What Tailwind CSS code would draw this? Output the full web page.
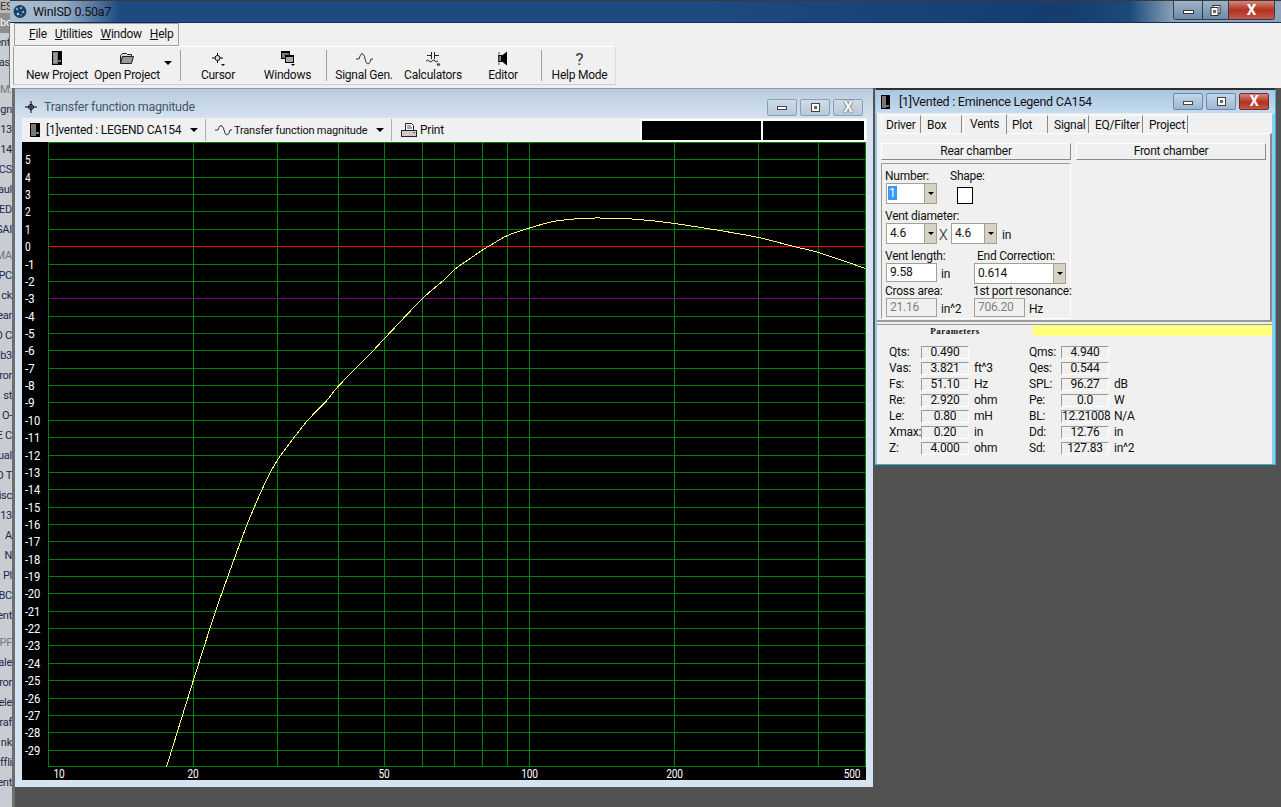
<!DOCTYPE html>
<html lang="en">
<head>
  <meta charset="UTF-8">
  <title>WinISD 0.50a7</title>
  <script src="https://cdn.jsdelivr.net/npm/@tailwindcss/browser@4"></script>
</head>
<body class="relative w-[1281px] h-[807px] overflow-hidden bg-[#525252] font-['Roboto',sans-serif] text-[12px] tracking-[-0.25px] leading-[13px] text-[#111]">

  <!-- Desktop behind the app, only a sliver shows on the left -->
  <div class="absolute left-0 top-0 w-[12px] h-[807px] overflow-hidden bg-[#c9ccd3] text-[11px] leading-[20px] text-[#1c2a4a]">
    <div class="h-[13px] leading-[13px] bg-[#b9b9b9] text-right pr-[2px] text-[#333]">ES</div>
    <div class="h-[20px] bg-[#8d8d8d] text-right pr-[2px] text-white">bo</div>
    <div class="flex flex-col items-end whitespace-nowrap">
      <div class="pr-[2px]">ent</div><div class="pr-[2px]">ras</div>
      <div class="mt-[7px] text-[#777]">M.</div>
      <div>gn</div><div>13</div><div>14</div><div>CS</div><div>aul</div><div>ED</div><div>SAI</div>
      <div class="mt-[6px] text-[#777]">MA</div>
      <div>TPC</div><div>ck</div><div>ear</div><div>O C</div><div>ob3</div><div>ror</div><div>st</div><div>O-</div><div>E C</div>
      <div>ual</div><div>D T</div><div>isc</div><div>13</div><div>A</div><div>N</div><div>Pl</div><div>BC</div><div>ent</div>
      <div class="mt-[7px] text-[#777]">PF</div>
      <div>ale</div><div>ror</div><div>ele</div><div>raf</div><div>nk</div><div>ffli</div><div>ent</div>
    </div>
  </div>
  <div class="absolute left-[9px] top-[23px] w-px h-[65px] bg-[#777]"></div>
  <div class="absolute left-[12px] top-[88px] w-[3px] h-[719px] bg-[#6e6e6e]"></div>

  <!-- Main window chrome -->
  <div class="absolute left-[10px] top-0 w-[1271px] h-[88px] flex flex-col bg-[#f0f0f0]">
    <header class="relative h-[23px] shrink-0 flex items-center pl-[3px] gap-[6px] border-t border-b border-t-[#3a3a3a] border-b-[#12305a] bg-[linear-gradient(90deg,#a9bdd2_0px,#9db3cb_50px,#1d4a80_110px,#1d4a80_700px,#163c70_1060px,#1c4a7c_1120px,#8fa4ba_1165px,#8fa4ba_1271px)]">
      <svg width="14" height="15" viewBox="0 0 14 15"><circle cx="7" cy="7.5" r="6.5" fill="#1f3f66"/><circle cx="4" cy="5" r="1.2" fill="#6fb0e0"/><circle cx="8" cy="4" r="1" fill="#a9d4f0"/><circle cx="10" cy="8" r="1.2" fill="#6fb0e0"/><circle cx="5" cy="10" r="1.2" fill="#a9d4f0"/><circle cx="8" cy="11" r="0.8" fill="#6fb0e0"/></svg>
      <span class="text-[12.5px] text-[#111]">WinISD 0.50a7</span>
      <div class="absolute right-[6px] top-0 flex h-[19px] w-[102px] rounded-b-[3px] border border-t-0 border-[#2a3f55] overflow-hidden">
        <div class="w-[29px] flex items-center justify-center bg-[linear-gradient(#9fb4c9,#6f89a5)] border-r border-[#2a3f55]"><span class="block w-[11px] h-[4px] mt-[3px] bg-white border border-[#333]"></span></div>
        <div class="w-[26px] flex items-center justify-center bg-[linear-gradient(#9fb4c9,#6f89a5)] border-r border-[#2a3f55]"><svg width="11" height="11" viewBox="0 0 11 11"><rect x="3" y="0.5" width="7" height="8" fill="#fff" stroke="#333"/><rect x="1" y="2.5" width="7" height="8" fill="#fff" stroke="#333"/><rect x="3" y="5" width="3" height="3" fill="#667"/></svg></div>
        <div class="flex-1 flex items-center justify-center bg-[linear-gradient(#d8867a,#b2321f_50%,#c4574a)] text-white text-[15px] font-bold leading-none">X</div>
      </div>
    </header>

    <nav class="h-[23px] w-[165px] ml-[4px] flex items-center gap-[8px] pl-[14px] border border-[#a0a0a0]">
      <span><u>F</u>ile</span><span><u>U</u>tilities</span><span><u>W</u>indow</span><span><u>H</u>elp</span>
    </nav>

    <div class="h-[39px] w-[603px] ml-[3px] flex items-stretch border-t border-l border-white border-l-[#a0a0a0] border-b border-b-[#cfcfcf] border-r border-r-[#dcdcdc] text-center">
      <div class="w-[10px] shrink-0"></div>
      <button class="w-[66px] shrink-0 flex flex-col items-center pt-[4px] whitespace-nowrap">
        <svg class="h-[15px]" width="12" height="15" viewBox="0 0 12 15"><rect x="1.5" y="0.5" width="9" height="13" fill="#777" stroke="#000"/><rect x="7" y="1" width="3" height="8" fill="#000"/><rect x="7" y="11" width="3" height="2" fill="#000"/><path d="M2 3h4M3 5h3M2 7h4M3 9h3M2 11h4" stroke="#bbb"/></svg>
        <span class="mt-[3px]">New Project</span>
      </button>
      <button class="w-[74px] shrink-0 flex flex-col items-center pt-[4px] whitespace-nowrap">
        <svg class="h-[15px]" width="16" height="15" viewBox="0 0 16 15"><path d="M1.5 4.5l2-2h4l1 1h4v2h-9l-2 7z" fill="#ddd" stroke="#222"/><path d="M3.5 5.5h11l-2 7h-11z" fill="#999" stroke="#222"/></svg>
        <span class="mt-[3px]">Open Project</span>
      </button>
      <div class="w-[16px] shrink-0 flex items-center pb-[5px]"><span class="block border-x-[4px] border-t-[4px] border-x-transparent border-t-black"></span></div>
      <div class="w-px shrink-0 my-[3px] bg-[#a0a0a0]"></div>

      <button class="w-[74px] shrink-0 flex flex-col items-center pt-[4px]">
        <svg class="h-[15px]" width="16" height="15" viewBox="0 0 16 15"><path d="M7.5 2v10M2 7h11" stroke="#000"/><circle cx="7.5" cy="7" r="2.5" fill="#ddd" stroke="#000"/><path d="M11 13h4l-2 2z" fill="#000"/></svg>
        <span class="mt-[3px]">Cursor</span>
      </button>
      <button class="w-[65px] shrink-0 flex flex-col items-center pt-[4px]">
        <svg class="h-[15px]" width="16" height="15" viewBox="0 0 16 15"><rect x="1.5" y="0.5" width="8" height="7" fill="#777" stroke="#000"/><rect x="5.5" y="4.5" width="8" height="7" fill="#aaa" stroke="#000"/><path d="M1 1.5h9M5 5.5h9" stroke="#000"/><path d="M11 13h4l-2 2z" fill="#000"/></svg>
        <span class="mt-[3px]">Windows</span>
      </button>
      <div class="w-[6px] shrink-0"></div>
      <div class="w-px shrink-0 my-[3px] bg-[#a0a0a0]"></div>

      <button class="w-[74px] shrink-0 flex flex-col items-center pt-[4px] whitespace-nowrap">
        <svg class="h-[15px]" width="17" height="15" viewBox="0 0 17 15"><path d="M0 8h3q2-7 4-5t2 5q1 5 3 5t3-5h2" fill="none" stroke="#333"/></svg>
        <span class="mt-[3px]">Signal Gen.</span>
      </button>
      <button class="w-[64px] shrink-0 flex flex-col items-center pt-[4px]">
        <svg class="h-[15px]" width="16" height="15" viewBox="0 0 16 15"><path d="M2 4.5h4M10 4.5h4M6.5 1v7M9.5 1v7M1 10q2-2 3 0t3 0 3 0 3 0M12 13h3l-1.5 2z" fill="none" stroke="#222"/></svg>
        <span class="mt-[3px]">Calculators</span>
      </button>
      <button class="w-[76px] shrink-0 flex flex-col items-center pt-[4px]">
        <svg class="h-[15px]" width="12" height="15" viewBox="0 0 12 15"><rect x="1.5" y="4.5" width="3" height="6" fill="#888" stroke="#000"/><path d="M5 4.5l5-4v14l-5-4z" fill="#000"/><path d="M2 1v13" stroke="#555"/></svg>
        <span class="mt-[3px]">Editor</span>
      </button>
      <div class="w-px shrink-0 my-[3px] bg-[#a0a0a0]"></div>

      <button class="w-[75px] shrink-0 flex flex-col items-center pt-[4px] whitespace-nowrap">
        <span class="h-[17px] text-[17px] leading-[17px] text-[#333]">?</span>
        <span class="mt-[1px]">Help Mode</span>
      </button>
    </div>
  </div>

  <!-- Chart window -->
  <section class="absolute left-[15px] top-[88px] w-[858px] h-[699px] flex flex-col px-[7px] bg-[#d6e4f2] border-t border-t-[#8b9aa9]">
    <div class="absolute inset-x-0 top-0 h-[30px] bg-[linear-gradient(#b9cbdc,#d5e3f0)]"></div>
    <div class="relative h-[29px] shrink-0 flex items-center pt-[6px] pl-[2px] gap-[6px]">
      <svg width="14" height="14" viewBox="0 0 14 14"><path d="M7 1v12M1 7h12" stroke="#000"/><circle cx="7" cy="7" r="2.5" fill="none" stroke="#000"/></svg>
      <span class="text-[12.5px] text-[#46566a]">Transfer function magnitude</span>
      <div class="ml-auto flex gap-[3px] pr-[3px] pt-[1px]">
        <div class="w-[30px] h-[17px] flex items-center justify-center rounded-[2px] border border-[#8d9fb2] bg-[linear-gradient(#cfdbe7,#b8c9da)]"><span class="block w-[10px] h-[4px] mt-[2px] bg-white border border-[#444]"></span></div>
        <div class="w-[30px] h-[17px] flex items-center justify-center rounded-[2px] border border-[#8d9fb2] bg-[linear-gradient(#cfdbe7,#b8c9da)]"><span class="flex items-center justify-center w-[9px] h-[9px] bg-white border border-[#444]"><span class="block w-[3px] h-[3px] bg-[#666]"></span></span></div>
        <div class="w-[30px] h-[17px] flex items-center justify-center rounded-[2px] border border-[#8d9fb2] bg-[linear-gradient(#cfdbe7,#b8c9da)] text-white text-[14px] font-bold [text-shadow:0_0_2px_#222]">X</div>
      </div>
    </div>

    <div class="relative h-[24px] shrink-0 -mr-px flex items-center bg-[#f0f0f0]">
      <svg class="ml-[8px] shrink-0" width="11" height="15" viewBox="0 0 11 15"><rect x="0.5" y="0.5" width="9" height="13" fill="#777" stroke="#000"/><rect x="6" y="1" width="3" height="8" fill="#000"/><rect x="6" y="11" width="3" height="2" fill="#000"/></svg>
      <span class="ml-[5px] w-[137px] shrink-0 whitespace-nowrap">[1]vented : LEGEND CA154</span>
      <span class="ml-[7px] block border-x-[4px] border-t-[4px] border-x-transparent border-t-black"></span>
      <div class="ml-[7px] w-px h-[22px] bg-[#b0b0b0]"></div>
      <svg class="ml-[9px] shrink-0" width="17" height="12" viewBox="0 0 17 12"><path d="M0 6h3q2-6 4-4t2 4q1 5 3 5t3-5h2" fill="none" stroke="#333"/></svg>
      <span class="ml-[2px] w-[135px] shrink-0 whitespace-nowrap text-[11px] tracking-[-0.2px]">Transfer function magnitude</span>
      <span class="ml-[7px] block border-x-[4px] border-t-[4px] border-x-transparent border-t-black"></span>
      <div class="ml-[7px] w-px h-[22px] bg-[#b0b0b0]"></div>
      <svg class="ml-[9px] shrink-0" width="16" height="16" viewBox="0 0 16 16"><path d="M4.5 8V1.5h6l2 2V8" fill="#fff" stroke="#222"/><path d="M6 4h4M6 6h5" stroke="#555"/><rect x="0.5" y="8.5" width="15" height="6" fill="#ccc" stroke="#222"/><rect x="12" y="10" width="2" height="1" fill="#e33"/></svg>
      <span class="ml-[3px]">Print</span>
      <div class="ml-auto flex gap-[2px] p-[2px] mr-px bg-white">
        <div class="w-[119px] h-[19px] bg-black"></div>
        <div class="w-[101px] h-[19px] bg-black"></div>
      </div>
    </div>

    <svg id="chart" class="block shrink-0 bg-black" width="844" height="638" viewBox="22 142 844 638" shape-rendering="crispEdges"></svg>
  </section>

  <!-- Vented box window -->
  <section class="absolute left-[875px] top-[88px] w-[401px] h-[377px] flex flex-col bg-[#8ccbec] border-l border-l-[#9fc4e0] border-t-2 border-t-[#2e2e2e] border-b border-b-[#2fb4d8] border-r border-r-[#2fb4d8]">
    <div class="absolute inset-x-0 top-0 h-[24px] bg-[linear-gradient(#a9c5e2,#c6dcf0)]"></div>
    <div class="relative h-[23px] shrink-0 flex items-center pl-[5px]">
      <svg width="9" height="14" viewBox="0 0 9 14"><rect x="0.5" y="0.5" width="8" height="13" fill="#777" stroke="#000"/><rect x="5" y="1" width="3" height="9" fill="#000"/><rect x="5" y="12" width="3" height="1" fill="#000"/></svg>
      <span class="ml-[9px] text-[12.5px]">[1]Vented : Eminence Legend CA154</span>
      <div class="ml-auto flex gap-[3px] pr-[6px]">
        <div class="w-[30px] h-[17px] flex items-center justify-center rounded-[2px] border border-[#6e8aa8] bg-[linear-gradient(#c4d6e8,#9db8d2)]"><span class="block w-[10px] h-[4px] mt-[2px] bg-white border border-[#444]"></span></div>
        <div class="w-[30px] h-[17px] flex items-center justify-center rounded-[2px] border border-[#6e8aa8] bg-[linear-gradient(#c4d6e8,#9db8d2)]"><span class="flex items-center justify-center w-[9px] h-[9px] bg-white border border-[#444]"><span class="block w-[3px] h-[3px] bg-[#666]"></span></span></div>
        <div class="w-[30px] h-[17px] flex items-center justify-center rounded-[2px] border border-[#7a2a20] bg-[linear-gradient(#d8867a,#b2321f_55%,#c4574a)] text-white text-[14px] font-bold">X</div>
      </div>
    </div>

    <!-- Tab strip -->
    <div class="relative h-[20px] shrink-0 flex items-end pl-[4px] gap-px bg-[#f0f0f0] ml-[1px] mr-[3px] pt-px">
      <div class="w-[40px] h-[18px] pl-[4px] pt-[3px] border-t border-l border-r border-t-white border-l-white border-r-[#888]">Driver</div>
      <div class="w-[40px] h-[18px] pl-[5px] pt-[3px] border-t border-r border-t-white border-r-[#888]">Box</div>
      <div class="w-[44px] h-[20px] -mb-px pl-[6px] pt-[3px] bg-[#f0f0f0] border-t border-l border-r border-t-white border-l-white border-r-[#888] z-10">Vents</div>
      <div class="w-[40px] h-[18px] pl-[4px] pt-[3px] border-t border-r border-t-white border-r-[#888]">Plot</div>
      <div class="w-[40px] h-[18px] pl-[5px] pt-[3px] border-t border-r border-t-white border-r-[#888]">Signal</div>
      <div class="w-[53px] h-[18px] pl-[5px] pt-[3px] border-t border-r border-t-white border-r-[#888]">EQ/Filter</div>
      <div class="w-[44px] h-[18px] pl-[5px] pt-[3px] border-t border-r border-t-white border-r-[#888]">Project</div>
    </div>

    <!-- Tab page -->
    <div class="relative h-[189px] shrink-0 ml-[1px] mr-[3px] px-[4px] pt-[9px] bg-[#f0f0f0] border-t border-t-white border-r-2 border-r-[#8a8a8a] border-b-2 border-b-[#9a9a9a]">
      <div class="flex gap-[5px]">
        <div class="w-[190px] h-[17px] leading-[14px] text-center border border-t-white border-l-white border-r-[#8a8a8a] border-b-[#8a8a8a]">Rear chamber</div>
        <div class="w-[190px] h-[17px] leading-[14px] text-center border border-t-white border-l-white border-r-[#8a8a8a] border-b-[#8a8a8a]">Front chamber</div>
      </div>

      <div class="w-[190px] h-[156px] mt-[3px] pl-[4px] border border-t-[#9a9a9a] border-l-[#9a9a9a] border-r-white border-b-white">
        <!-- number and shape -->
        <div class="flex mt-[6px]">
          <div class="w-[64px] shrink-0">
            <div class="h-[13px] -ml-px">Number:</div>
            <div class="w-[51px] h-[21px] flex bg-white border border-[#a69f8f]">
              <div class="flex-1 pl-[1px] pt-[3px]"><span class="px-[1px] bg-[#3399ff] text-white">1</span></div>
              <div class="w-[12px] flex items-center justify-center bg-[#d6d3c4] border-l border-[#a69f8f]"><span class="block border-x-[3px] border-t-[3px] border-x-transparent border-t-black"></span></div>
            </div>
          </div>
          <div>
            <div class="h-[13px]">Shape:</div>
            <div class="w-[16px] h-[17px] mt-[4px] ml-[7px] bg-white border border-black"></div>
          </div>
        </div>

        <!-- vent diameter -->
        <div class="h-[13px] mt-[6px] -ml-px">Vent diameter:</div>
        <div class="flex items-center h-[21px]">
          <div class="w-[51px] h-[21px] flex bg-white border border-[#a69f8f]">
            <div class="flex-1 pl-[3px] pt-[3px]">4.6</div>
            <div class="w-[12px] flex items-center justify-center bg-[#d6d3c4] border-l border-[#a69f8f]"><span class="block border-x-[3px] border-t-[3px] border-x-transparent border-t-black"></span></div>
          </div>
          <span class="w-[14px] pt-[4px] pl-[2px] text-[14px] font-light">X</span>
          <div class="w-[46px] h-[21px] flex bg-white border border-[#a69f8f]">
            <div class="flex-1 pl-[3px] pt-[3px]">4.6</div>
            <div class="w-[12px] flex items-center justify-center bg-[#d6d3c4] border-l border-[#a69f8f]"><span class="block border-x-[3px] border-t-[3px] border-x-transparent border-t-black"></span></div>
          </div>
          <span class="ml-[5px] pt-[4px]">in</span>
        </div>

        <!-- vent length and end correction -->
        <div class="flex mt-[6px] h-[35px]">
          <div class="w-[88px] shrink-0">
            <div class="h-[13px] -ml-px">Vent length:</div>
            <div class="flex items-center">
              <div class="w-[51px] h-[19px] pl-[3px] pt-[2px] bg-white border border-[#a69f8f]">9.58</div>
              <span class="ml-[4px] pt-[3px]">in</span>
            </div>
          </div>
          <div>
            <div class="h-[13px] ml-[3px]">End Correction:</div>
            <div class="w-[92px] h-[21px] flex bg-white border border-[#a69f8f]">
              <div class="flex-1 pl-[3px] pt-[3px]">0.614</div>
              <div class="w-[12px] flex items-center justify-center bg-[#d6d3c4] border-l border-[#a69f8f]"><span class="block border-x-[3px] border-t-[3px] border-x-transparent border-t-black"></span></div>
            </div>
          </div>
        </div>

        <!-- read only values -->
        <div class="flex">
          <div class="w-[88px] shrink-0">
            <div class="h-[13px] -ml-px">Cross area:</div>
            <div class="flex items-center">
              <div class="w-[51px] h-[19px] pl-[3px] pt-[2px] text-[#808080] border border-[#a69f8f]">21.16</div>
              <span class="ml-[4px] pt-[3px]">in^2</span>
            </div>
          </div>
          <div>
            <div class="h-[13px] -ml-px whitespace-nowrap">1st port resonance:</div>
            <div class="flex items-center">
              <div class="w-[51px] h-[19px] pl-[3px] pt-[2px] text-[#808080] border border-[#a69f8f]">706.20</div>
              <span class="ml-[4px] pt-[3px]">Hz</span>
            </div>
          </div>
        </div>
      </div>
    </div>

    <!-- Parameters -->
    <div class="relative flex-1 ml-[1px] mr-[3px] bg-[#f0f0f0]">
      <div class="flex h-[12px] mt-[2px] border-t border-t-[#9a9a9a]">
        <div class="w-[156px] text-center font-['Liberation_Serif',serif] font-bold text-[9px] leading-[12px] tracking-[0.5px]">Parameters</div>
        <div class="flex-1 bg-[#ffff80]"></div>
      </div>
      <div class="pt-[10px] pl-[12px] flex flex-col gap-[3px]">
        <div class="flex h-[13px]"><span class="w-[32px]">Qts:</span><span class="w-[48px] text-center border border-t-[#9a9a9a] border-l-[#9a9a9a] border-r-white border-b-white leading-[11px]">0.490</span><span class="w-[60px] pl-[5px]"></span><span class="w-[32px]">Qms:</span><span class="w-[48px] text-center border border-t-[#9a9a9a] border-l-[#9a9a9a] border-r-white border-b-white leading-[11px]">4.940</span><span class="pl-[5px]"></span></div>
        <div class="flex h-[13px]"><span class="w-[32px]">Vas:</span><span class="w-[48px] text-center border border-t-[#9a9a9a] border-l-[#9a9a9a] border-r-white border-b-white leading-[11px]">3.821</span><span class="w-[60px] pl-[5px]">ft^3</span><span class="w-[32px]">Qes:</span><span class="w-[48px] text-center border border-t-[#9a9a9a] border-l-[#9a9a9a] border-r-white border-b-white leading-[11px]">0.544</span><span class="pl-[5px]"></span></div>
        <div class="flex h-[13px]"><span class="w-[32px]">Fs:</span><span class="w-[48px] text-center border border-t-[#9a9a9a] border-l-[#9a9a9a] border-r-white border-b-white leading-[11px]">51.10</span><span class="w-[60px] pl-[5px]">Hz</span><span class="w-[32px]">SPL:</span><span class="w-[48px] text-center border border-t-[#9a9a9a] border-l-[#9a9a9a] border-r-white border-b-white leading-[11px]">96.27</span><span class="pl-[5px]">dB</span></div>
        <div class="flex h-[13px]"><span class="w-[32px]">Re:</span><span class="w-[48px] text-center border border-t-[#9a9a9a] border-l-[#9a9a9a] border-r-white border-b-white leading-[11px]">2.920</span><span class="w-[60px] pl-[5px]">ohm</span><span class="w-[32px]">Pe:</span><span class="w-[48px] text-center border border-t-[#9a9a9a] border-l-[#9a9a9a] border-r-white border-b-white leading-[11px]">0.0</span><span class="pl-[5px]">W</span></div>
        <div class="flex h-[13px]"><span class="w-[32px]">Le:</span><span class="w-[48px] text-center border border-t-[#9a9a9a] border-l-[#9a9a9a] border-r-white border-b-white leading-[11px]">0.80</span><span class="w-[60px] pl-[5px]">mH</span><span class="w-[32px]">BL:</span><span class="w-[48px] text-center border border-t-[#9a9a9a] border-l-[#9a9a9a] border-r-white border-b-white leading-[11px]">12.21008</span><span class="pl-[5px]">N/A</span></div>
        <div class="flex h-[13px]"><span class="w-[32px]">Xmax:</span><span class="w-[48px] text-center border border-t-[#9a9a9a] border-l-[#9a9a9a] border-r-white border-b-white leading-[11px]">0.20</span><span class="w-[60px] pl-[5px]">in</span><span class="w-[32px]">Dd:</span><span class="w-[48px] text-center border border-t-[#9a9a9a] border-l-[#9a9a9a] border-r-white border-b-white leading-[11px]">12.76</span><span class="pl-[5px]">in</span></div>
        <div class="flex h-[13px]"><span class="w-[32px]">Z:</span><span class="w-[48px] text-center border border-t-[#9a9a9a] border-l-[#9a9a9a] border-r-white border-b-white leading-[11px]">4.000</span><span class="w-[60px] pl-[5px]">ohm</span><span class="w-[32px]">Sd:</span><span class="w-[48px] text-center border border-t-[#9a9a9a] border-l-[#9a9a9a] border-r-white border-b-white leading-[11px]">127.83</span><span class="pl-[5px]">in^2</span></div>
      </div>
    </div>
  </section>

  <script>
    // Draw the plot, coordinates in the viewBox are page pixels
    const rows = [159,177,194,211,229,246,264,281,298,316,333,350,368,385,402,420,437,455,472,489,507,524,541,559,576,593,611,628,645,663,680,698,715,732,750];
    const cols = [193,277,338,384,422,454,482,507,529,674,758,818];
    const curve = [[166.5,767],[193.5,680],[215.5,611.5],[234,559.5],[249.5,518.5],[266.5,480],[277.5,460],[294.5,437],[308,420],[325.5,402],[339,385.5],[370,354],[384.5,338.5],[422.5,298.5],[444,280],[454.5,269.5],[466.5,261],[482.5,250],[490,245.5],[507.5,235.5],[529.5,228],[553.5,221.5],[580,218.5],[600,218],[623.5,218.5],[650,220.5],[674.5,223.5],[713.5,229.5],[758.5,237.5],[793.5,246.5],[818.5,252.5],[865.5,268.5]];

    // Catmull-Rom through the measured points, so there are no kinks
    let d = `M${curve[0][0]} ${curve[0][1]}`;
    for (let i = 0; i < curve.length - 1; i++) {
      const p0 = curve[Math.max(i - 1, 0)], p1 = curve[i], p2 = curve[i + 1], p3 = curve[Math.min(i + 2, curve.length - 1)];
      d += ` C${p1[0] + (p2[0] - p0[0]) / 6} ${p1[1] + (p2[1] - p0[1]) / 6} ${p2[0] - (p3[0] - p1[0]) / 6} ${p2[1] - (p3[1] - p1[1]) / 6} ${p2[0]} ${p2[1]}`;
    }

    // axis labels are tall and narrow in the original
    const label = (x, y, s, anchor) => {
      const w = [...s].reduce((sum, c) => sum + (c === "-" ? 4 : 5.5), 0);
      return `<text x="${x}" y="${y}" fill="#fff" font-size="13" text-anchor="${anchor}" textLength="${w}" lengthAdjust="spacingAndGlyphs">${s}</text>`;
    };

    let svg = "";
    // frame
    svg += `<rect x="48" y="142" width="818" height="1" fill="#008000"/>`;
    svg += `<rect x="48" y="142" width="1" height="625" fill="#008000"/>`;
    svg += `<rect x="865" y="142" width="1" height="625" fill="#008000"/>`;
    svg += `<rect x="48" y="766" width="818" height="1" fill="#008000"/>`;
    cols.forEach(x => { svg += `<rect x="${x}" y="142" width="1" height="625" fill="#008000"/>`; });
    rows.forEach((y, i) => {
      const db = 5 - i;
      let color = "#008000";
      if (db === 0) color = "#ff0000";
      if (db === -3) color = "#800080";
      svg += `<rect x="49" y="${y}" width="816" height="1" fill="${color}"/>`;
      svg += label(25, y + 5, String(db), "start");
    });
    [[59,"10"],[193,"20"],[384,"50"],[529.5,"100"],[674.5,"200"],[852,"500"]].forEach(([x, s]) => {
      svg += label(x, 778, s, "middle");
    });
    svg += `<path d="${d}" fill="none" stroke="#ffff80" stroke-width="1"/>`;
    document.getElementById("chart").innerHTML = svg;
  </script>
</body>
</html>
